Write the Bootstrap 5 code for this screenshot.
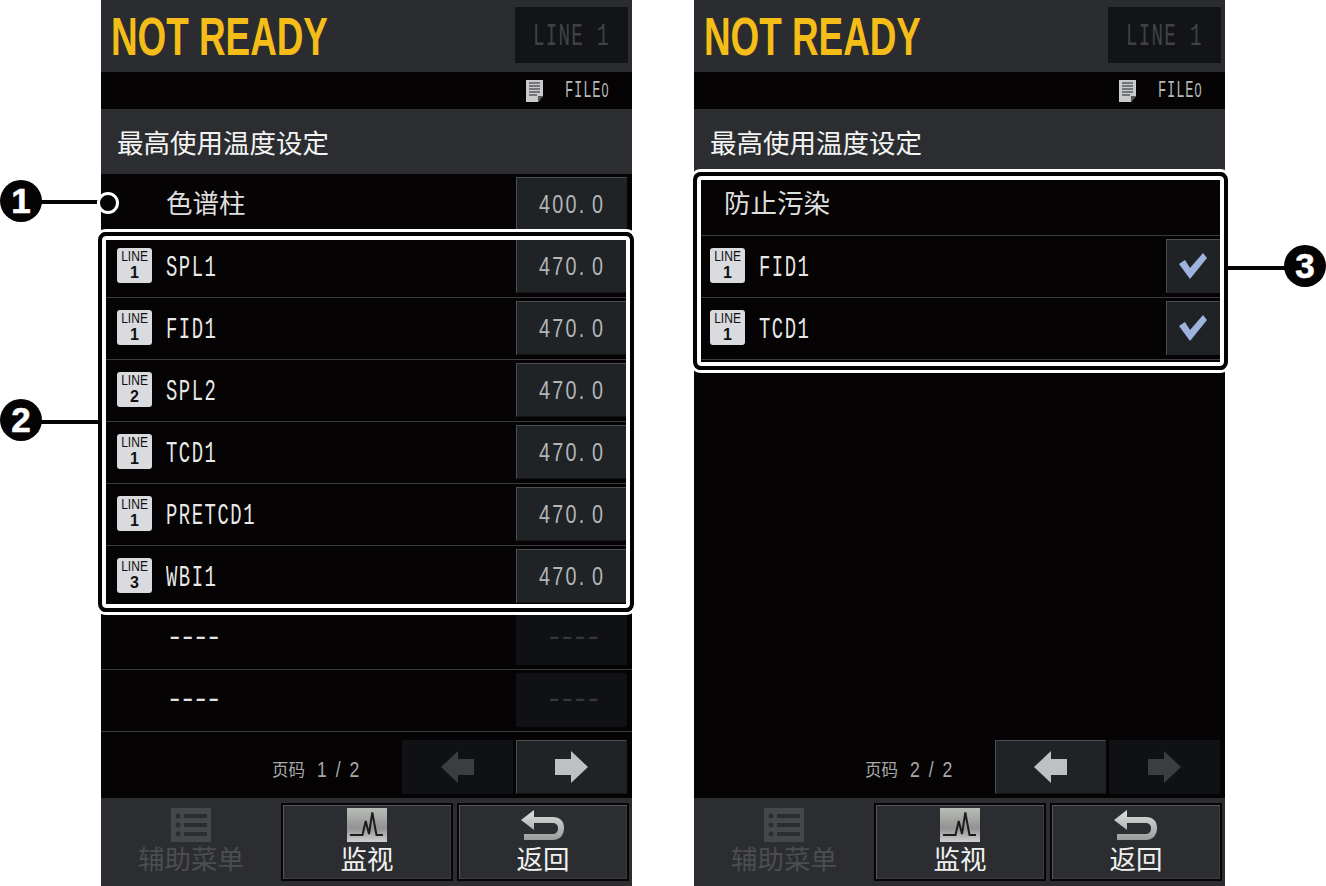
<!DOCTYPE html>
<html lang="zh">
<head>
<meta charset="utf-8">
<title>最高使用温度设定</title>
<link href="https://cdn.jsdelivr.net/npm/bootstrap@5.3.0/dist/css/bootstrap.min.css" rel="stylesheet">
<style>
html,body{margin:0;background:#fff;overflow:hidden}
.stage{position:relative;width:1326px;height:886px;padding-left:101px;gap:62px}
.scr{width:531px;height:886px;background:#050303;color:#e4e4e4;font-family:"Liberation Sans",sans-serif}
.cjk{font-family:"Noto Sans CJK SC",sans-serif;font-size:26.5px;line-height:1;font-weight:400}
.sq{display:inline-block;white-space:nowrap;transform-origin:0 50%}
.mono{font-family:"Liberation Mono",monospace}
.hdr{height:72px;background:#2a2c30;padding:7px 4px 9px 10px}
.ready{font-weight:700;font-size:53px;line-height:60px;height:56px;width:216px;color:#f5bd18;transform:scaleX(.695)}
.linebox{width:113px;height:56px;background:#131417;color:#404246}
.t-hdr{font-size:32px;width:77px;letter-spacing:2.1px;margin-top:4px;transform:scaleX(.6)}
.filebar{height:37px;padding-right:22px;gap:21px;color:#b8b8b8}
.t-file{font-size:23px;width:45px;letter-spacing:1.4px;margin-top:2px;transform:scaleX(.6)}
.t-file span{font-family:"Liberation Sans",sans-serif;font-size:21px}
.titlebar{height:65px;background:#2b2d31;padding:2px 0 0 16px;color:#f4f4f4}
.rw{height:62px;border-bottom:1px solid #3a3a3f;padding:3px 5px 4px 16px}
.badge-line{width:35px;height:35px;background:#d9dbdf;color:#111;border-radius:3px;margin:0 14px 2px 0;font-size:14px}
.badge-line i{font-style:normal;line-height:16px;transform:scaleX(.86)}
.badge-line b{font-size:16px;line-height:18px}
.t-lbl{font-size:29px;line-height:34px;color:#e8e8e8;letter-spacing:2.4px;margin-top:6px;transform:scaleX(.65)}
.t-rule{font-size:29px;line-height:34px;width:52px;letter-spacing:-4.4px;text-align:left;margin-top:2px}
.cjk-row{margin-top:-3px;color:#dedede}
.spacer{width:49px}
.cjk-first{margin-left:14px}
.valbtn{width:111px;height:54px;background:#1f2326;border:1px solid #1f2326;border-top-color:#4a4e52;border-left-color:#4a4e52;border-bottom-color:#101214;color:#b3b5b8;padding:0;border-radius:0}
.valbtn.off{background:#101114;border-color:#101114;color:#37383c}
.t-val{font-size:26px;letter-spacing:3px;word-spacing:-3px;width:65px;text-align:left;transform:scaleX(.76)}
.chk{width:54px;height:54px;background:#1f2326;border:1px solid #1f2326;border-top-color:#4a4e52;border-left-color:#4a4e52;padding:0}
.pager{height:66px;padding:8px 5px 4px 0;gap:3px}
.pgtxt{color:#a8a8a8;margin-right:39px;gap:12px;padding-top:4px}
.pgtxt .cjk{font-size:16.5px}
.t-pg{font-size:22px;width:43px;word-spacing:5px;transform:scaleX(.8)}
.ftr{height:88px;background:#2b2d31;padding:5px 3px 5px 4px;gap:4px}
.fbtn{width:172px;height:78px;background:#2b2d31;border:2px solid #050505;box-shadow:inset 1px 1px 0 #55575a,inset -1px -1px 0 #3a3c40;color:#f0f0f0;padding:3px 0 0;border-radius:0}
.fbtn.off{border-color:#2b2d31;box-shadow:none;color:#4b4d50}
.fbtn .cjk{margin-top:1px}
.fbtn svg{display:block}
.hl{position:absolute;border:4px solid #050303;border-radius:8px;box-shadow:0 0 0 3px #fff,inset 0 0 0 4px #fff;pointer-events:none}
.hl-temp{left:-3px;top:232px;width:536px;height:380px}
.hl-guard{left:-1px;top:172px;width:535px;height:198px}
.num{position:absolute;width:42px;height:42px;border-radius:50%;background:#050303;color:#fff;font-weight:700;font-size:35px;line-height:42px;text-align:center;font-family:"Liberation Sans",sans-serif;-webkit-text-stroke:.6px #fff}
.lead-line{position:absolute;height:4px;width:62px;background:#050303}
.ring{position:absolute;left:97px;top:192px;width:22px;height:22px;border-radius:50%;background:#050303;border:3px solid #fff}
.n1{left:0;top:180px}.n2{left:0;top:399px}.n3{left:1284px;top:245px}
.l1{left:38px;top:200px}.l2{left:38px;top:420px}.l3{left:1226px;top:266px}
</style>
</head>
<body>
<div class="stage d-flex">

<section class="scr position-relative d-flex flex-column">
  <div class="hdr d-flex justify-content-between"><div class="ready sq">NOT READY</div><div class="linebox d-flex align-items-center justify-content-center"><span class="sq mono t-hdr">LINE 1</span></div></div>
  <div class="filebar d-flex align-items-center justify-content-end">
    <svg width="18" height="22" viewBox="0 0 18 22"><path d="M0 0H17V16L12 22H0Z" fill="#c9cacc"/><path d="M3 3H14M3 6H14M3 9H14M3 12H14M3 15H11" stroke="#222" stroke-width="1.2"/><path d="M12 22V16H17Z" fill="#555"/></svg>
    <span class="sq mono t-file">FILE<span>0</span></span></div>
  <div class="titlebar cjk d-flex align-items-center">最高使用温度设定</div>

  <div class="rw d-flex align-items-center"><span class="spacer"></span><span class="cjk cjk-row text-nowrap">色谱柱</span><button class="valbtn ms-auto"><span class="sq t-val">400. 0</span></button></div>
  <div class="rw d-flex align-items-center"><span class="badge-line d-flex flex-column align-items-center justify-content-center"><i>LINE</i><b>1</b></span><span class="sq mono t-lbl">SPL1</span><button class="valbtn ms-auto"><span class="sq t-val">470. 0</span></button></div>
  <div class="rw d-flex align-items-center"><span class="badge-line d-flex flex-column align-items-center justify-content-center"><i>LINE</i><b>1</b></span><span class="sq mono t-lbl">FID1</span><button class="valbtn ms-auto"><span class="sq t-val">470. 0</span></button></div>
  <div class="rw d-flex align-items-center"><span class="badge-line d-flex flex-column align-items-center justify-content-center"><i>LINE</i><b>2</b></span><span class="sq mono t-lbl">SPL2</span><button class="valbtn ms-auto"><span class="sq t-val">470. 0</span></button></div>
  <div class="rw d-flex align-items-center"><span class="badge-line d-flex flex-column align-items-center justify-content-center"><i>LINE</i><b>1</b></span><span class="sq mono t-lbl">TCD1</span><button class="valbtn ms-auto"><span class="sq t-val">470. 0</span></button></div>
  <div class="rw d-flex align-items-center"><span class="badge-line d-flex flex-column align-items-center justify-content-center"><i>LINE</i><b>1</b></span><span class="sq mono t-lbl">PRETCD1</span><button class="valbtn ms-auto"><span class="sq t-val">470. 0</span></button></div>
  <div class="rw d-flex align-items-center"><span class="badge-line d-flex flex-column align-items-center justify-content-center"><i>LINE</i><b>3</b></span><span class="sq mono t-lbl">WBI1</span><button class="valbtn ms-auto"><span class="sq t-val">470. 0</span></button></div>
  <div class="rw d-flex align-items-center"><span class="spacer"></span><span class="sq mono t-rule">----</span><button class="valbtn off ms-auto"><span class="sq mono t-rule">----</span></button></div>
  <div class="rw d-flex align-items-center"><span class="spacer"></span><span class="sq mono t-rule">----</span><button class="valbtn off ms-auto"><span class="sq mono t-rule">----</span></button></div>

  <div class="pager d-flex align-items-center justify-content-end">
    <span class="pgtxt d-flex align-items-center"><span class="cjk">页码</span><span class="sq t-pg">1 / 2</span></span>
    <button class="valbtn off pgbtn"><svg width="34" height="32" viewBox="0 0 34 32"><path d="M0 16 17 0V8H33V24H17V32Z" fill="#3c3d40"/></svg></button>
    <button class="valbtn pgbtn"><svg width="34" height="32" viewBox="0 0 34 32"><path d="M33 16 16 0V8H0V24H16V32Z" fill="#bfc0c3"/></svg></button>
  </div>

  <div class="ftr d-flex">
    <button class="fbtn off d-flex flex-column align-items-center"><svg width="40" height="36" viewBox="0 0 40 36"><rect width="40" height="34" fill="#45474a"/><g fill="#2b2d31"><circle cx="7" cy="8" r="2.5"/><circle cx="7" cy="17" r="2.5"/><circle cx="7" cy="26" r="2.5"/><rect x="13" y="6" width="23" height="4"/><rect x="13" y="15" width="23" height="4"/><rect x="13" y="24" width="23" height="4"/></g></svg><span class="cjk">辅助菜单</span></button>
    <button class="fbtn d-flex flex-column align-items-center"><svg width="40" height="36" viewBox="0 0 40 36"><defs><linearGradient id="g1" x1="0" y1="0" x2="0" y2="1"><stop offset="0" stop-color="#b9bdb8"/><stop offset=".6" stop-color="#929392"/><stop offset="1" stop-color="#cfcfcf"/></linearGradient></defs><rect width="40" height="34" fill="url(#g1)"/><path d="M3 27H15.5L18.7 13 22 26 25.3 4.5 29.5 27H36" fill="none" stroke="#1c1c1c" stroke-width="2"/></svg><span class="cjk">监视</span></button>
    <button class="fbtn d-flex flex-column align-items-center"><svg width="44" height="36" viewBox="0 0 44 36"><defs><linearGradient id="g2" x1="0" y1="0" x2="0" y2="1"><stop offset="0" stop-color="#dfe0e0"/><stop offset="1" stop-color="#9a9c9c"/></linearGradient></defs><path d="M0 12 13 2V9H32C39 9 43 13 43 20C43 27 39 32 32 32H3V26H31C35 26 37 24 37 20C37 17 35 15 31 15H13V22Z" fill="url(#g2)"/></svg><span class="cjk">返回</span></button>
  </div>

  <div class="hl hl-temp"></div>
</section>

<section class="scr position-relative d-flex flex-column">
  <div class="hdr d-flex justify-content-between"><div class="ready sq">NOT READY</div><div class="linebox d-flex align-items-center justify-content-center"><span class="sq mono t-hdr">LINE 1</span></div></div>
  <div class="filebar d-flex align-items-center justify-content-end">
    <svg width="18" height="22" viewBox="0 0 18 22"><path d="M0 0H17V16L12 22H0Z" fill="#c9cacc"/><path d="M3 3H14M3 6H14M3 9H14M3 12H14M3 15H11" stroke="#222" stroke-width="1.2"/><path d="M12 22V16H17Z" fill="#555"/></svg>
    <span class="sq mono t-file">FILE<span>0</span></span></div>
  <div class="titlebar cjk d-flex align-items-center">最高使用温度设定</div>

  <div class="rw d-flex align-items-center"><span class="cjk cjk-row cjk-first">防止污染</span></div>
  <div class="rw d-flex align-items-center"><span class="badge-line d-flex flex-column align-items-center justify-content-center"><i>LINE</i><b>1</b></span><span class="sq mono t-lbl">FID1</span><button class="chk ms-auto"><svg width="29" height="27" viewBox="0 0 29 27"><path d="M0 11 6 7 11 15 24 0 28 5 11 26Z" fill="#9db2dc"/></svg></button></div>
  <div class="rw d-flex align-items-center"><span class="badge-line d-flex flex-column align-items-center justify-content-center"><i>LINE</i><b>1</b></span><span class="sq mono t-lbl">TCD1</span><button class="chk ms-auto"><svg width="29" height="27" viewBox="0 0 29 27"><path d="M0 11 6 7 11 15 24 0 28 5 11 26Z" fill="#9db2dc"/></svg></button></div>
  <div class="flex-grow-1"></div>

  <div class="pager d-flex align-items-center justify-content-end">
    <span class="pgtxt d-flex align-items-center"><span class="cjk">页码</span><span class="sq t-pg">2 / 2</span></span>
    <button class="valbtn pgbtn"><svg width="34" height="32" viewBox="0 0 34 32"><path d="M0 16 17 0V8H33V24H17V32Z" fill="#bfc0c3"/></svg></button>
    <button class="valbtn off pgbtn"><svg width="34" height="32" viewBox="0 0 34 32"><path d="M33 16 16 0V8H0V24H16V32Z" fill="#3c3d40"/></svg></button>
  </div>

  <div class="ftr d-flex">
    <button class="fbtn off d-flex flex-column align-items-center"><svg width="40" height="36" viewBox="0 0 40 36"><rect width="40" height="34" fill="#45474a"/><g fill="#2b2d31"><circle cx="7" cy="8" r="2.5"/><circle cx="7" cy="17" r="2.5"/><circle cx="7" cy="26" r="2.5"/><rect x="13" y="6" width="23" height="4"/><rect x="13" y="15" width="23" height="4"/><rect x="13" y="24" width="23" height="4"/></g></svg><span class="cjk">辅助菜单</span></button>
    <button class="fbtn d-flex flex-column align-items-center"><svg width="40" height="36" viewBox="0 0 40 36"><rect width="40" height="34" fill="url(#g1)"/><path d="M3 27H15.5L18.7 13 22 26 25.3 4.5 29.5 27H36" fill="none" stroke="#1c1c1c" stroke-width="2"/></svg><span class="cjk">监视</span></button>
    <button class="fbtn d-flex flex-column align-items-center"><svg width="44" height="36" viewBox="0 0 44 36"><path d="M0 12 13 2V9H32C39 9 43 13 43 20C43 27 39 32 32 32H3V26H31C35 26 37 24 37 20C37 17 35 15 31 15H13V22Z" fill="url(#g2)"/></svg><span class="cjk">返回</span></button>
  </div>

  <div class="hl hl-guard"></div>
</section>

<span class="lead-line l1"></span>
<span class="ring"></span>
<span class="num n1">1</span>
<span class="lead-line l2"></span>
<span class="num n2">2</span>
<span class="lead-line l3"></span>
<span class="num n3">3</span>
</div>
</body>
</html>
